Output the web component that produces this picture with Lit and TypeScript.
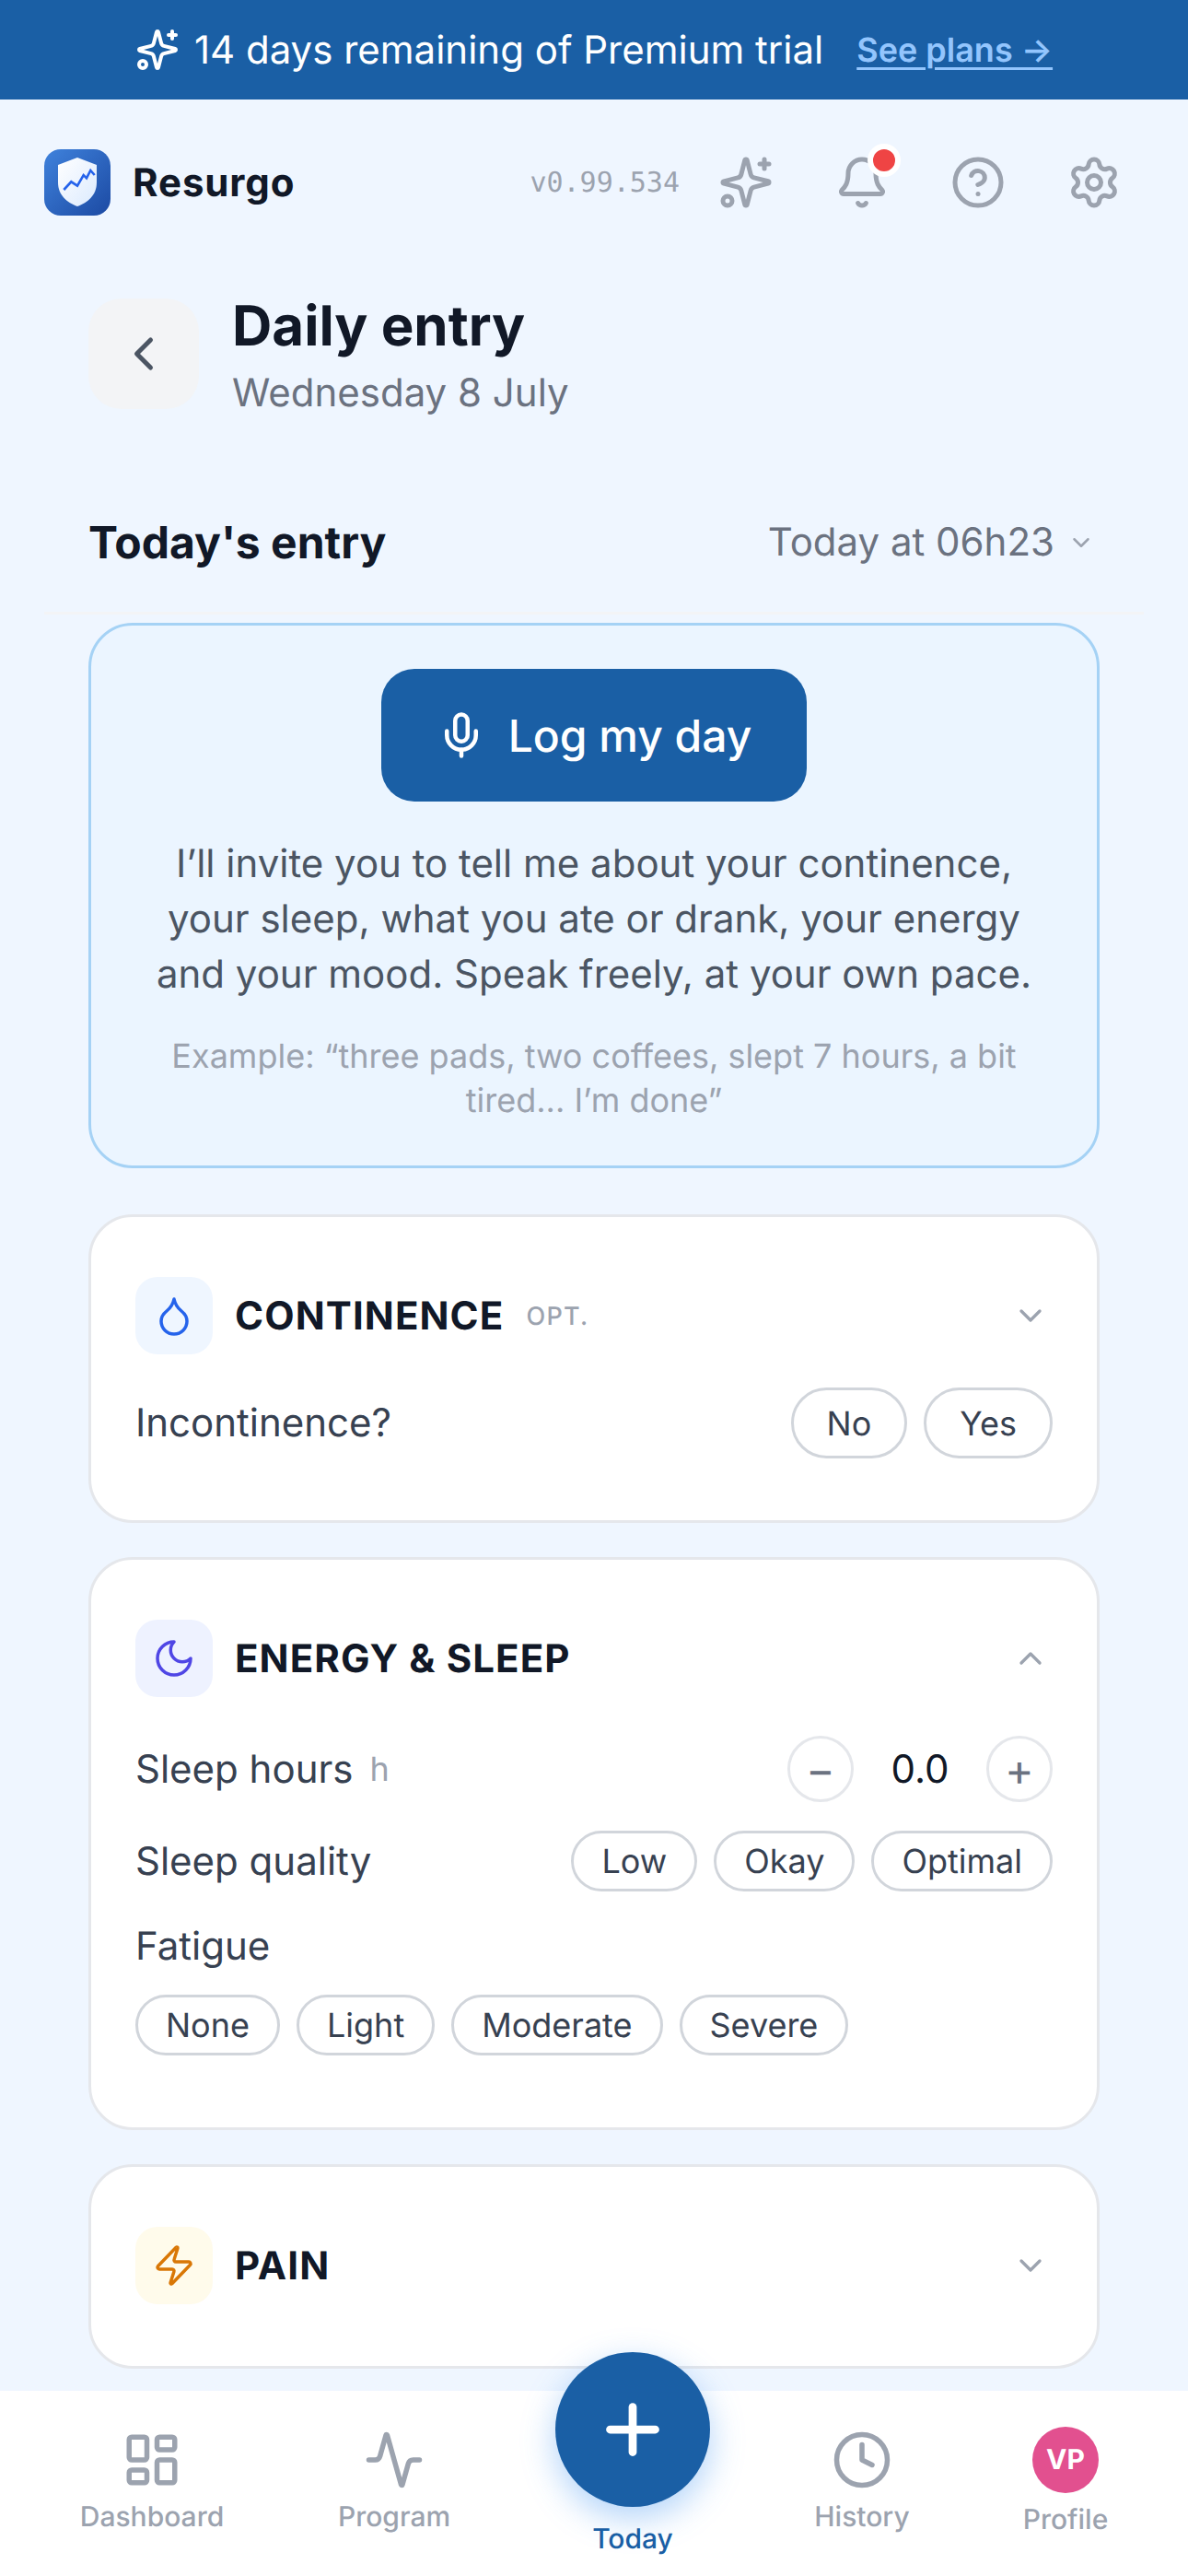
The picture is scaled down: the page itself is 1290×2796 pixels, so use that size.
import { LitElement, html, css, svg } from "lit";
import { customElement } from "lit/decorators.js";

const ic = (cls: string, body: unknown) =>
  html`<svg class="ic ${cls}" viewBox="0 0 24 24" fill="none" stroke="currentColor" stroke-width="2" stroke-linecap="round" stroke-linejoin="round">${body}</svg>`;

const sparkles = svg`<path d="M9.937 15.5A2 2 0 0 0 8.5 14.063l-6.135-1.582a.5.5 0 0 1 0-.962L8.5 9.936A2 2 0 0 0 9.937 8.5l1.582-6.135a.5.5 0 0 1 .963 0L14.063 8.5A2 2 0 0 0 15.5 9.937l6.135 1.581a.5.5 0 0 1 0 .964L15.5 14.063a2 2 0 0 0-1.437 1.437l-1.582 6.135a.5.5 0 0 1-.963 0z"/><path d="M20 2v4"/><path d="M22 4h-4"/><circle cx="4" cy="20" r="2"/>`;
const bell = svg`<path d="M10.268 21a2 2 0 0 0 3.464 0"/><path d="M3.262 15.326A1 1 0 0 0 4 17h16a1 1 0 0 0 .74-1.673C19.41 13.956 18 12.499 18 8A6 6 0 0 0 6 8c0 4.499-1.411 5.956-2.738 7.326"/>`;
const help = svg`<circle cx="12" cy="12" r="10"/><path d="M9.09 9a3 3 0 0 1 5.83 1c0 2-3 3-3 3"/><path d="M12 17h.01"/>`;
const gear = svg`<path d="M9.671 4.136a2.34 2.34 0 0 1 4.659 0 2.34 2.34 0 0 0 3.319 1.915 2.34 2.34 0 0 1 2.33 4.033 2.34 2.34 0 0 0 0 3.831 2.34 2.34 0 0 1-2.33 4.033 2.34 2.34 0 0 0-3.319 1.915 2.34 2.34 0 0 1-4.659 0 2.34 2.34 0 0 0-3.32-1.915 2.34 2.34 0 0 1-2.33-4.033 2.34 2.34 0 0 0 0-3.831A2.34 2.34 0 0 1 6.35 6.051a2.34 2.34 0 0 0 3.319-1.915"/><circle cx="12" cy="12" r="3"/>`;
const down = svg`<path d="m6 9 6 6 6-6"/>`;
const up = svg`<path d="m18 15-6-6-6 6"/>`;
const left = svg`<path d="m15 18-6-6 6-6"/>`;
const mic = svg`<path d="M12 19v3"/><path d="M19 10v2a7 7 0 0 1-14 0v-2"/><rect x="9" y="2" width="6" height="13" rx="3"/>`;
const drop = svg`<path d="M12 22a7 7 0 0 0 7-7c0-2-1-3.9-3-5.5s-3.5-4-4-6.5c-.5 2.5-2 4.9-4 6.5C6 11.1 5 13 5 15a7 7 0 0 0 7 7z"/>`;
const moon = svg`<path d="M12 3a6 6 0 0 0 9 9 9 9 0 1 1-9-9Z"/>`;
const zap = svg`<path d="M4 14a1 1 0 0 1-.78-1.63l9.9-10.2a.5.5 0 0 1 .86.46l-1.92 6.02A1 1 0 0 0 13 10h7a1 1 0 0 1 .78 1.63l-9.9 10.2a.5.5 0 0 1-.86-.46l1.92-6.02A1 1 0 0 0 11 14z"/>`;
const dash = svg`<rect x="3" y="3" width="7" height="9" rx="1"/><rect x="14" y="3" width="7" height="5" rx="1"/><rect x="14" y="12" width="7" height="9" rx="1"/><rect x="3" y="16" width="7" height="5" rx="1"/>`;
const activity = svg`<path d="M22 12h-2.48a2 2 0 0 0-1.93 1.46l-2.35 8.36a.25.25 0 0 1-.48 0L9.24 2.18a.25.25 0 0 0-.48 0l-2.35 8.36A2 2 0 0 1 4.49 12H2"/>`;
const clock = svg`<circle cx="12" cy="12" r="10"/><polyline points="12 6 12 12 16 14"/>`;
const plus = svg`<path d="M5 12h14"/><path d="M12 5v14"/>`;

@customElement("app-root")
export class AppRoot extends LitElement {
  static styles = css`
    :host { display: flex; flex-direction: column; width: 1290px; height: 2796px; overflow: hidden; background: #eff6ff; font-family: Inter, "Liberation Sans", sans-serif; color: #111827; text-rendering: geometricPrecision; }
    * { box-sizing: border-box; }
    .ic { display: block; flex: none; }
    .s48 { width: 48px; height: 48px; }
    .s60 { width: 60px; height: 60px; }
    .s66 { width: 66px; height: 66px; }
    .s40 { width: 40px; height: 40px; }
    .s30 { width: 30px; height: 30px; }
    .s54 { width: 54px; height: 54px; }
    .s84 { width: 84px; height: 84px; stroke-width: 2.5; }
    .thin { stroke-width: 1.75; }

    .banner { flex: none; height: 108px; background: #1a5fa5; color: #fff; display: flex; align-items: center; justify-content: center; font-size: 42px; }
    .banner-text { margin-left: 16px; }
    .banner-link { margin-left: 36px; font-size: 36px; font-weight: 600; color: #93c5fd; text-decoration: underline; text-underline-offset: 6px; text-decoration-thickness: 3px; }

    main { flex: 1; min-height: 0; overflow: hidden; }
    .top { height: 180px; padding: 0 72px 0 48px; display: flex; align-items: center; }
    .logo { width: 72px; height: 72px; flex: none; }
    .brand { margin-left: 24px; font-size: 42px; font-weight: 700; letter-spacing: 0.9px; }
    .version { margin-left: auto; margin-right: 42px; font-family: "DejaVu Sans Mono", monospace; font-size: 30px; color: #9ca3af; }
    .top-icons { display: flex; gap: 66px; color: #9ca3af; }
    .bell { position: relative; }
    .dot { position: absolute; top: -12px; left: 36px; width: 36px; height: 36px; border-radius: 50%; background: #ef4444; border: 6px solid #fff; }

    .content { padding: 36px 96px 0; }
    .page-head { display: flex; align-items: flex-start; gap: 36px; }
    .back { width: 120px; height: 120px; border-radius: 36px; background: #f3f4f6; color: #4b5563; display: flex; align-items: center; justify-content: center; flex: none; }
    .titles { margin-top: 0; }
    .title { font-size: 60px; line-height: 60px; font-weight: 700; }
    .sub { margin-top: 13px; font-size: 42px; line-height: 60px; color: #6b7280; }
    .section { margin: 84px -48px 9px; padding: 0 48px 26px; height: 126px; border-bottom: 3px solid #f3f4f6; display: flex; align-items: flex-start; justify-content: space-between; }
    .section-title { font-size: 48px; line-height: 96px; font-weight: 700; }
    .select { display: flex; align-items: center; gap: 14px; font-size: 42px; line-height: 96px; color: #6b7280; padding-right: 5px; margin-left: 2px; }
    .select .ic { color: #9ca3af; }

    .hero { height: 592px; border: 3px solid #a5d2f5; border-radius: 48px; background: #ebf5ff; padding: 47px 48px 0; display: flex; flex-direction: column; align-items: center; text-align: center; }
    .cta { height: 144px; padding: 0 60px; border-radius: 36px; background: #1a5fa5; color: #fff; display: flex; align-items: center; gap: 24px; font-size: 48px; font-weight: 500; }
    .hero-p { margin: 38px 0 0; font-size: 42px; line-height: 60px; color: #4b5563; }
    .hero-ex { margin: 34px 0 0; font-size: 36px; line-height: 48px; color: #9ca3af; }

    .card { border: 3px solid #e5e7eb; border-radius: 48px; background: #fff; padding: 65px 48px 67px; margin-top: 37px; }
    .first { margin-top: 50px; }
    .card-head { display: flex; align-items: center; }
    .tile { width: 84px; height: 84px; border-radius: 24px; display: flex; align-items: center; justify-content: center; flex: none; margin-right: 24px; }
    .blue { background: #eff6ff; color: #2563eb; }
    .indigo { background: #eef2ff; color: #4f46e5; }
    .amber { background: #fffbeb; color: #d97706; }
    .card-title { font-size: 42px; line-height: 54px; padding-top: 1px; font-weight: 700; letter-spacing: 1.1px; }
    .opt { margin-left: 24px; font-size: 27px; font-weight: 500; color: #9ca3af; letter-spacing: 1.3px; }
    .chev { margin-left: auto; margin-right: 4px; color: #9ca3af; }

    .row { display: flex; align-items: center; justify-content: space-between; }
    .label-wrap { display: flex; align-items: center; }
    .label { font-size: 42px; color: #374151; }
    .unit { margin-left: 18px; font-size: 36px; color: #9ca3af; }
    .pills { display: flex; gap: 18px; }
    .pill { height: 66px; padding: 0 30px; border: 3px solid #d1d5db; border-radius: 999px; display: flex; align-items: center; font-size: 36px; color: #374151; }
    .tall { height: 77px; padding: 0 36px; }
    .r-inc { margin-top: 36px; }
    .r-sleep { margin-top: 42px; }
    .r-qual { margin-top: 31px; }
    .fatigue { margin-top: 33px; line-height: 54px; }
    .r-fat { margin-top: 25px; justify-content: flex-start; }
    .card.sleep { padding-bottom: 78px; }
    .stepper { display: flex; align-items: center; }
    .step { width: 72px; height: 72px; border: 3px solid #e5e7eb; border-radius: 50%; display: flex; align-items: center; justify-content: center; font-size: 48px; color: #6b7280; }
    .val { width: 144px; text-align: center; font-size: 42px; color: #111827; }

    nav { flex: none; height: 201px; background: #fff; display: grid; grid-template-columns: 330px 196px 322px 176px 266px; align-items: start; padding-top: 42px; color: #9ca3af; position: relative; }
    .item { display: flex; flex-direction: column; align-items: center; font-size: 30px; line-height: 38px; font-weight: 500; }
    .item .ic { margin-bottom: 10px; }
    .today { margin-top: -84px; color: #1a5fa5; }
    .fab { width: 168px; height: 168px; border-radius: 50%; background: #1a5fa5; color: #fff; display: flex; align-items: center; justify-content: center; margin-bottom: 16px; box-shadow: 0 12px 36px rgba(59, 146, 240, 0.4); }
    .today .ic { margin: 0; }
    .profile { margin-top: -3px; }
    .avatar { width: 72px; height: 72px; border-radius: 50%; background: #e2508f; color: #fff; display: flex; align-items: center; justify-content: center; font-size: 30px; font-weight: 700; margin-bottom: 10px; }
  `;

  render() {
    return html`
      <div class="banner">
        ${ic("s48", sparkles)}
        <span class="banner-text">14 days remaining of Premium trial</span>
        <span class="banner-link">See plans →</span>
      </div>
      <main>
        <div class="top">
          <svg class="logo" viewBox="0 0 72 72">
            <defs>
              <linearGradient id="lg" x1="0" y1="0" x2="1" y2="1"><stop offset="0" stop-color="#3f82dc" /><stop offset="1" stop-color="#1c4aa3" /></linearGradient>
              <linearGradient id="sg" x1="0" y1="0" x2="1" y2="1"><stop offset="0" stop-color="#ffffff" /><stop offset="1" stop-color="#dbeafe" /></linearGradient>
            </defs>
            <rect width="72" height="72" rx="18" fill="url(#lg)" />
            <path d="M36 9 L57 17 V36 C57 50 47 58 36 62 C25 58 15 50 15 36 V17 Z" fill="url(#sg)" />
            <path d="M21.3 44 L29.3 35.3 L36 39.7 L42.7 28 L46 31.3 L50.3 23 L54.7 28" fill="none" stroke="#2563eb" stroke-width="2.6" />
          </svg>
          <span class="brand">Resurgo</span>
          <span class="version">v0.99.534</span>
          <div class="top-icons">
            ${ic("s60", sparkles)}
            <div class="bell">${ic("s60", bell)}<span class="dot"></span></div>
            ${ic("s60", help)}
            ${ic("s60", gear)}
          </div>
        </div>
        <div class="content">
          <div class="page-head">
            <div class="back">${ic("s60", left)}</div>
            <div class="titles">
              <div class="title">Daily entry</div>
              <div class="sub">Wednesday 8 July</div>
            </div>
          </div>
          <div class="section">
            <span class="section-title">Today's entry</span>
            <span class="select">Today at 06h23 ${ic("s30", down)}</span>
          </div>
          <div class="hero">
            <div class="cta">${ic("s54", mic)}<span>Log my day</span></div>
            <p class="hero-p">I’ll invite you to tell me about your continence,<br />your sleep, what you ate or drank, your energy<br />and your mood. Speak freely, at your own pace.</p>
            <p class="hero-ex">Example: “three pads, two coffees, slept 7 hours, a bit<br />tired... I’m done”</p>
          </div>

          <div class="card first">
            <div class="card-head">
              <div class="tile blue">${ic("s48 thin", drop)}</div>
              <span class="card-title">CONTINENCE</span><span class="opt">OPT.</span>
              <span class="chev">${ic("s40", down)}</span>
            </div>
            <div class="row r-inc">
              <span class="label">Incontinence?</span>
              <div class="pills"><span class="pill tall">No</span><span class="pill tall">Yes</span></div>
            </div>
          </div>

          <div class="card sleep">
            <div class="card-head">
              <div class="tile indigo">${ic("s48 thin", moon)}</div>
              <span class="card-title">ENERGY &amp; SLEEP</span>
              <span class="chev">${ic("s40", up)}</span>
            </div>
            <div class="row r-sleep">
              <span class="label-wrap"><span class="label">Sleep hours</span><span class="unit">h</span></span>
              <div class="stepper"><span class="step">−</span><span class="val">0.0</span><span class="step">+</span></div>
            </div>
            <div class="row r-qual">
              <span class="label">Sleep quality</span>
              <div class="pills"><span class="pill">Low</span><span class="pill">Okay</span><span class="pill">Optimal</span></div>
            </div>
            <div class="label fatigue">Fatigue</div>
            <div class="row r-fat">
              <div class="pills"><span class="pill">None</span><span class="pill">Light</span><span class="pill">Moderate</span><span class="pill">Severe</span></div>
            </div>
          </div>

          <div class="card">
            <div class="card-head">
              <div class="tile amber">${ic("s48 thin", zap)}</div>
              <span class="card-title">PAIN</span>
              <span class="chev">${ic("s40", down)}</span>
            </div>
          </div>
        </div>
      </main>
      <nav>
        <div class="item">${ic("s66", dash)}Dashboard</div>
        <div class="item">${ic("s66", activity)}Program</div>
        <div class="item today"><div class="fab">${ic("s84", plus)}</div>Today</div>
        <div class="item">${ic("s66", clock)}History</div>
        <div class="item profile"><div class="avatar">VP</div>Profile</div>
      </nav>
    `;
  }
}
